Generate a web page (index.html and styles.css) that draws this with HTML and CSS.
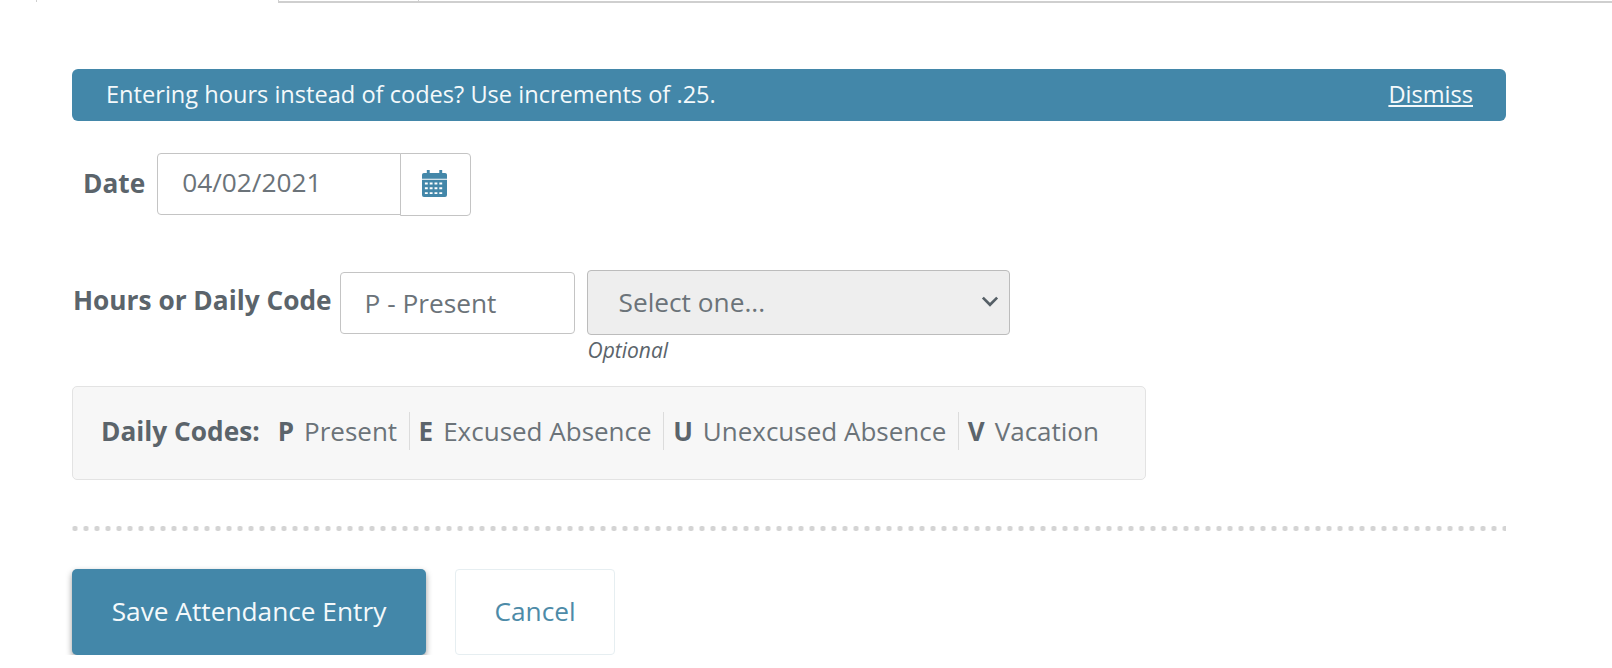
FILE: index.html
```html
<!DOCTYPE html>
<html lang="en">
<head>
    <meta charset="UTF-8">
    <title>Attendance Entry</title>
    <link rel="stylesheet" href="styles.css">
</head>
<body>
    <div class="tab-strip">
        <div class="tab-tick"></div>
        <div class="tab-first"></div>
        <div class="tab-rest"></div>
    </div>

    <div class="page">
        <div class="notice">
            <span>Entering hours instead of codes? Use increments of .25.</span>
            <a href="#" class="notice-link">Dismiss</a>
        </div>

        <form class="entry-form">
            <div class="date-row">
                <label for="date">Date</label>
                <input type="text" id="date" class="date-input" value="04/02/2021">
                <button type="button" class="date-button" aria-label="Pick a date">
                    <svg width="25" height="27" viewBox="0 0 26 28">
                        <path fill="#4387a9" d="M5 0h3v3h10V0h3v3h3a2 2 0 0 1 2 2v4H0V5a2 2 0 0 1 2-2h3z"/>
                        <path fill="#4387a9" fill-rule="evenodd" d="M0 10h26v16a2 2 0 0 1-2 2H2a2 2 0 0 1-2-2zM3 13v2h3v-2zm5 0v2h3v-2zm5 0v2h3v-2zm5 0v2h3v-2zM3 18v2h3v-2zm5 0v2h3v-2zm5 0v2h3v-2zm5 0v2h3v-2zM3 23v2h3v-2zm5 0v2h3v-2zm5 0v2h3v-2zm5 0v2h3v-2z"/>
                    </svg>
                </button>
            </div>

            <div class="hours-row">
                <label for="hours">Hours or Daily Code</label>
                <input type="text" id="hours" class="hours-input" value="P - Present">
                <div class="select-group">
                    <div class="select-box">
                        <span>Select one...</span>
                        <svg width="18" height="11" viewBox="0 0 16 10">
                            <path d="M1.5 1.5 8 8l6.5-6.5" fill="none" stroke="#555f66" stroke-width="2.4"/>
                        </svg>
                    </div>
                    <em class="hint">Optional</em>
                </div>
            </div>

            <div class="codes-panel">
                <strong class="codes-title">Daily Codes:</strong>
                <span class="code"><b>P</b> Present</span>
                <span class="code"><b>E</b> Excused Absence</span>
                <span class="code"><b>U</b> Unexcused Absence</span>
                <span class="code"><b>V</b> Vacation</span>
            </div>

            <div class="dots"></div>

            <div class="actions">
                <button type="submit" class="save-button">Save Attendance Entry</button>
                <a href="#" class="cancel-button">Cancel</a>
            </div>
        </form>
    </div>
</body>
</html>
```

FILE: styles.css
```css
* {
    box-sizing: border-box;
}

body {
    margin: 0;
    background-color: #ffffff;
    font-family: "Open Sans", sans-serif;
    font-size: 26.25px;
    color: #5b646b;
}

.tab-strip {
    display: flex;
    height: 3px;
}

.tab-tick {
    width: 1px;
    height: 2px;
    margin-left: 36px;
    background-color: #cfcfcf;
}

.tab-first {
    width: 141px;
    margin-left: 241px;
    border-left: 1px solid #cfcfcf;
    border-right: 1px solid #cfcfcf;
    border-bottom: 2px solid #cfcfcf;
}

.tab-rest {
    flex: 1;
    border-bottom: 2px solid #cfcfcf;
}

.page {
    width: 1434px;
    margin-left: 72px;
    padding-top: 66px;
}

.notice {
    display: flex;
    justify-content: space-between;
    align-items: center;
    height: 52px;
    padding: 0 33px 2px 34px;
    font-size: 23.6px;
    background-color: #4387a9;
    border-radius: 6px;
    color: #f4f9fb;
}

.notice-link {
    color: #f4f9fb;
}

.date-row {
    display: flex;
    align-items: flex-start;
    margin-top: 32px;
    padding-left: 11px;
}

.date-row label,
.hours-row label {
    font-weight: 700;
}

.date-row label {
    align-self: center;
    margin-right: 12px;
    padding-bottom: 3px;
}

input {
    font-family: inherit;
    font-size: 26.25px;
    color: #6b7379;
    background-color: #ffffff;
    border: 1px solid #c4c4c4;
    border-radius: 4px;
    outline: none;
}

.date-input {
    width: 244px;
    height: 62px;
    padding: 0 24px 5px;
    border-radius: 4px 0 0 4px;
}

.date-button {
    display: flex;
    justify-content: center;
    align-items: center;
    width: 71px;
    height: 63px;
    margin-left: -1px;
    padding: 0 2px 2px 0;
    background-color: #ffffff;
    border: 1px solid #c4c4c4;
    border-radius: 0 4px 4px 0;
}

.hours-row {
    display: flex;
    align-items: flex-start;
    margin-top: 54px;
    padding-left: 1px;
}

.hours-row label {
    margin-top: 12px;
    margin-right: 8px;
    white-space: nowrap;
}

.hours-input {
    width: 235px;
    height: 62px;
    margin-top: 2px;
    padding: 0 24px;
}

.select-group {
    display: flex;
    flex-direction: column;
    margin-left: 12px;
}

.select-box {
    display: flex;
    justify-content: space-between;
    align-items: center;
    width: 423px;
    height: 65px;
    padding: 0 10px 2px 31px;
    background-color: #eeeeee;
    border: 1px solid #bcbcbc;
    border-radius: 4px;
    color: #6b7379;
}

.hint {
    margin-top: 1px;
    margin-left: 1px;
    font-size: 21px;
    line-height: 28px;
}

.codes-panel {
    display: flex;
    align-items: center;
    width: 1074px;
    height: 94px;
    margin-top: 22px;
    padding: 0 0 4px 28px;
    background-color: #f7f7f7;
    border: 1px solid #e3e3e3;
    border-radius: 5px;
}

.codes-title {
    margin-right: 18px;
}

.code {
    display: flex;
    align-items: center;
    gap: 10px;
    height: 38px;
    padding: 0 11.5px 0 9px;
    font-size: 26px;
    border-left: 1px solid #dcdcdc;
    color: #6b7379;
}

.codes-title + .code {
    padding-left: 0;
    border-left: none;
}

.code b {
    color: #5b646b;
}

.dots {
    height: 5px;
    margin-top: 46px;
    background-image: radial-gradient(circle, #d4d4d4 2.5px, transparent 3px);
    background-size: 11px 5px;
    background-position: -2.5px 0;
}

.actions {
    display: flex;
    gap: 29px;
    margin-top: 38px;
}

.save-button {
    width: 354px;
    height: 86px;
    padding: 0 0 2px;
    font-family: inherit;
    font-size: 26.25px;
    color: #f4f9fb;
    background-color: #4387a9;
    border: none;
    border-radius: 5px;
    box-shadow: 0 3px 6px rgba(0, 0, 0, 0.4);
}

.cancel-button {
    display: flex;
    justify-content: center;
    align-items: center;
    width: 160px;
    height: 86px;
    padding-bottom: 2px;
    color: #4d8ba8;
    text-decoration: none;
    background-color: #ffffff;
    border: 1px solid #e6eef1;
    border-radius: 4px;
}
```
